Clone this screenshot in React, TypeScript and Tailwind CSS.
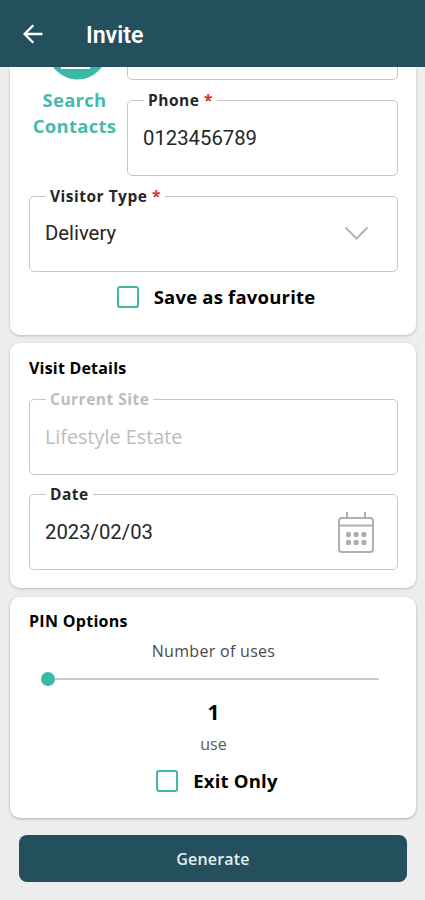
import { useState, type ReactNode } from "react";

type FieldProps = {
    label: string;
    required?: boolean;
    disabled?: boolean;
    children: ReactNode;
};

function Field({ label, required, disabled, children }: FieldProps) {
    return (
        <fieldset className="h-[83px] w-full min-w-0 rounded-[5px] border-[1.5px] border-[#c6c6c6] pl-[15px] pr-[23px]">
            <legend
                className={`ml-px h-[15px] whitespace-nowrap px-1 text-[15.5px] font-bold leading-[15px] tracking-[0.5px] ${disabled ? "text-[#bcbcbc]" : "text-[#262626]"}`}
            >
                {label}
                {required && <span className="text-[#dd2c2c]"> *</span>}
            </legend>
            <div
                className={`flex h-[60px] items-center justify-between text-[19.8px] ${disabled ? "text-[#bcbcbc]" : "text-[#262626]"}`}
            >
                {children}
            </div>
        </fieldset>
    );
}

function Checkbox({ label }: { label: string }) {
    const [checked, setChecked] = useState(false);

    return (
        <button onClick={() => setChecked(!checked)} className="flex items-center justify-center gap-[15px]">
            <span
                className={`size-[22px] rounded-[3px] border-2 border-[#45b5a5] ${checked ? "bg-[#45b5a5]" : "bg-white"}`}
            />
            <span className="whitespace-nowrap text-[18.5px] font-bold leading-6 tracking-[0.2px] text-black">{label}</span>
        </button>
    );
}

function CalendarIcon() {
    return (
        <svg width="36" height="42" viewBox="0 0 36 42" fill="none" stroke="#b0b0b0" strokeWidth="2">
            <rect x="1" y="7" width="34" height="34" rx="3" />
            <path d="M1 14.5H35M9 1v6M27 1v6" />
            <g fill="#adadad" stroke="none">
                <rect x="8" y="21" width="5" height="5" rx="1.5" />
                <rect x="15.7" y="21" width="5" height="5" rx="1.5" />
                <rect x="23.4" y="21" width="5" height="5" rx="1.5" />
                <rect x="8" y="29" width="5" height="5" rx="1.5" />
                <rect x="15.7" y="29" width="5" height="5" rx="1.5" />
                <rect x="23.4" y="29" width="5" height="5" rx="1.5" />
            </g>
        </svg>
    );
}

export default function App() {
    return (
        <div className="flex h-[900px] w-[425px] flex-col overflow-hidden bg-[#ededed] font-['Open_Sans','Noto_Sans',sans-serif]">
            {/* App bar */}
            <header className="flex h-[67px] shrink-0 items-center bg-[#244f5c] pl-[23px] text-white">
                <svg width="20" height="20" viewBox="0 0 20 20" fill="none" stroke="currentColor" strokeWidth="2.3">
                    <path d="M19.5 10H2M10.3 1.2 1.6 10l8.7 8.8" />
                </svg>
                <h1 className="ml-[43px] mt-0.5 font-[Roboto] text-[23.2px] font-semibold leading-8">Invite</h1>
            </header>

            <main className="flex flex-col pl-[10px] pr-[9px]">
                {/* Visitor, scrolled under the app bar */}
                <section className="h-[268px] rounded-b-[10px] bg-white pl-[19px] pr-[18px] shadow-[0_1px_3px_rgba(0,0,0,0.22)]">
                    <div className="flex">
                        <div className="flex w-[98px] shrink-0 flex-col items-center text-center">
                            <svg width="60" height="13" viewBox="0 0 60 13">
                                <circle cx="29.5" cy="-17.3" r="29.9" fill="#3bb9a7" />
                                <path d="M13 0H42V2H13z" fill="#fff" />
                            </svg>
                            <p className="mr-[7px] mt-[7px] text-[18.5px] font-bold leading-[26px] tracking-[0.3px] text-[#48b9aa]">
                                Search
                                <br />
                                Contacts
                            </p>
                        </div>
                        <div className="min-w-0 flex-1">
                            <div className="mb-[13px] h-[13px] rounded-b-[5px] border-[1.5px] border-t-0 border-[#c6c6c6]" />
                            <Field label="Phone" required>
                                <span className="font-[Roboto] text-[20.3px]">0123456789</span>
                            </Field>
                        </div>
                    </div>
                    <div className="mt-[12.5px]">
                        <Field label="Visitor Type" required>
                            <span className="font-[Roboto] text-[20.3px]">Delivery</span>
                            <svg
                                width="25"
                                height="15"
                                viewBox="0 0 25 15"
                                fill="none"
                                stroke="#b5b5b5"
                                strokeWidth="2"
                                className="mr-[5px]"
                            >
                                <path d="m1.5 1.5 11 11 11-11" />
                            </svg>
                        </Field>
                    </div>
                    <div className="mt-[13px] flex justify-center pl-[5px]">
                        <Checkbox label="Save as favourite" />
                    </div>
                </section>

                <section className="mt-2 h-[245px] rounded-[10px] bg-white pl-[19px] pr-[18px] pt-[13px] shadow-[0_1px_3px_rgba(0,0,0,0.22)]">
                    <h2 className="text-base font-bold leading-6 tracking-[0.2px] text-black">Visit Details</h2>
                    <div className="mt-3 flex flex-col gap-3">
                        <Field label="Current Site" disabled>
                            <span>Lifestyle Estate</span>
                        </Field>
                        <Field label="Date">
                            <span className="font-[Roboto] text-[20.3px]">2023/02/03</span>
                            <CalendarIcon />
                        </Field>
                    </div>
                </section>

                <section className="mt-[9px] h-[221px] rounded-[10px] bg-white pl-[19px] pr-[18px] pt-3 shadow-[0_1px_3px_rgba(0,0,0,0.28)]">
                    <h2 className="text-base font-bold leading-6 tracking-[0.3px] text-black">PIN Options</h2>
                    <div className="flex flex-col items-center">
                        <p className="mt-1.5 text-base leading-6 tracking-[0.3px] text-[#4a4a4a]">Number of uses</p>
                        <div className="mr-[8px] mt-[9px] flex w-[338px] items-center">
                            <span className="size-[14px] rounded-full bg-[#3bb9a7]" />
                            <span className="h-[2px] flex-1 bg-[#cbcbcb]" />
                        </div>
                        <p className="mt-3 text-[21px] font-bold leading-7 text-black">1</p>
                        <p className="mt-1.5 text-base leading-6 text-[#5a5a5a]">use</p>
                        <div className="mt-[13px] pl-[7px]">
                            <Checkbox label="Exit Only" />
                        </div>
                    </div>
                </section>

                <button className="mx-[9px] mt-[17px] h-[47px] rounded-lg bg-[#244f5c] text-base font-semibold tracking-[0.2px] text-[#e4eef0]">
                    Generate
                </button>
            </main>
        </div>
    );
}
